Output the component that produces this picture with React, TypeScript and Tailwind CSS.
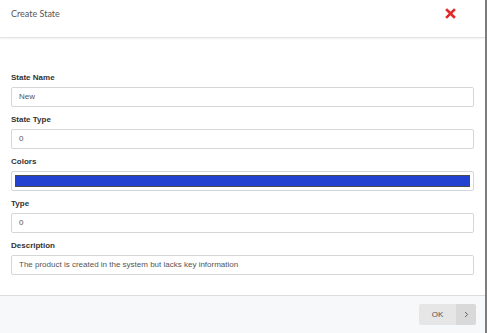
import { ChevronRight } from 'lucide-react';

const FIELDS = [
  { label: 'State Name', value: 'New' },
  { label: 'State Type', value: '0' },
  { label: 'Colors', value: null },
  { label: 'Type', value: '0' },
  { label: 'Description', value: 'The product is created in the system but lacks key information' },
];

export default function App() {
  return (
    <div className="flex h-[333px] w-[487px] flex-col border-r-2 border-[#7d7d7d] bg-white font-['Liberation_Sans',Arial,sans-serif]">
      {/* Header */}
      <div className="flex h-[38px] shrink-0 items-start justify-between border-b border-[#e3e3e3] pl-[11px] pr-[29px] pt-[7px] shadow-[0_1px_2px_rgba(0,0,0,0.06)]">
        <span className="font-['Lato',sans-serif] text-[9px] leading-[13px] text-[#555]">Create State</span>
        <svg width="11" height="11" viewBox="0 0 11 11" className="mt-[1px]">
          <path d="M2 2 L9 9 M9 2 L2 9" stroke="#e12a2a" strokeWidth="2.6" strokeLinecap="square" />
        </svg>
      </div>

      {/* Body */}
      <div className="flex flex-1 flex-col pl-[11px] pr-[11px] pt-[34px]">
        {FIELDS.map((f) => (
          <div key={f.label} className="mb-[7px] flex flex-col">
            <label className="h-[12px] text-[8px] font-bold leading-[12px] text-[#333]">{f.label}</label>
            <div className="mt-[3px] flex h-[20px] items-center rounded-[2px] border border-[#d6d6d6] bg-white">
              {f.value === null ? (
                <div className="mx-[3px] h-[12px] flex-1 border border-[#4a4a4a] bg-[#2342d2]" />
              ) : (
                <span className="pl-[7px] text-[8px] text-[#555]">{f.value}</span>
              )}
            </div>
          </div>
        ))}
      </div>

      {/* Footer */}
      <div className="flex h-[38px] shrink-0 items-center justify-end border-t border-[#dcdcdc] bg-[#f7f8fa] pr-[9px]">
        <div className="flex h-[21px] overflow-hidden rounded-[2px]">
          <span className="flex w-[37px] items-center justify-center bg-[#e6e6e6] text-[8px] text-[#555]">OK</span>
          <span className="flex w-[20px] items-center justify-center bg-[#d9d9d9] text-[#555]">
            <ChevronRight size={9} strokeWidth={2.5} />
          </span>
        </div>
      </div>
    </div>
  );
}
